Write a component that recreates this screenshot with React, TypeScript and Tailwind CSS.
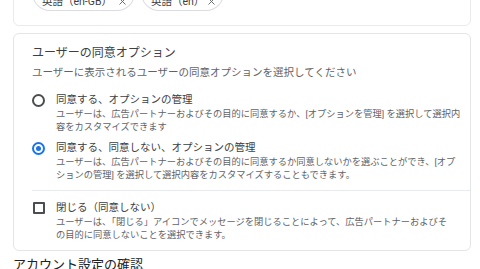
import { X } from "lucide-react";

const font = "font-['Roboto','Noto_Sans_CJK_JP',sans-serif]";

function Chip({ label, w }: { label: string; w: string }) {
  return (
    <span
      className={`flex h-[18px] ${w} items-center justify-between rounded-b-full border border-t-0 border-[#dadce0] pl-[9px] pr-[6px] text-[10.5px] text-[#3c4043]`}
    >
      <span>{label}</span>
      <X size={11} strokeWidth={2} className="text-[#5f6368]" />
    </span>
  );
}

function Radio({ checked }: { checked?: boolean }) {
  return (
    <span
      className={`mt-[0.5px] flex h-[13px] w-[13px] shrink-0 items-center justify-center rounded-full border-2 ${
        checked ? "border-[#1a73e8]" : "border-[#4a4e52]"
      }`}
    >
      {checked && <span className="h-[5px] w-[5px] rounded-full bg-[#1a73e8]" />}
    </span>
  );
}

function Option({
  control,
  title,
  lines,
}: {
  control: React.ReactNode;
  title: string;
  lines: string[];
}) {
  return (
    <div className="flex items-start gap-[11px] pr-[11px]">
      {control}
      <div className="min-w-0">
        <div className="text-[10.5px] leading-[14px] text-[#3c4043]">{title}</div>
        <div className="text-[9.25px] leading-[13px] text-[#5f6368]">
          {lines.map((l) => (
            <div key={l} className="whitespace-nowrap">
              {l}
            </div>
          ))}
        </div>
      </div>
    </div>
  );
}

export default function App() {
  return (
    <div className={`h-[269px] w-[480px] overflow-hidden bg-white ${font}`}>
      <div className="pl-[13px] pr-[9px]">
        <div className="-mt-[30px] flex h-[56px] items-end gap-[6px] rounded-[6px] border border-[#e8eaed] pb-[14px] pl-[18px]">
          <Chip label="英語（en-GB）" w="w-[103px]" />
          <Chip label="英語（en）" w="w-[83px]" />
        </div>

        <div className="mt-[7px] h-[218px] rounded-[6px] border border-[#e3e5e8] pl-[18px] pt-[11px]">
          <div className="text-[12px] leading-[16px] text-[#3c4043]">ユーザーの同意オプション</div>
          <div className="mt-[5px] text-[10.5px] leading-[14px] text-[#5f6368]">
            ユーザーに表示されるユーザーの同意オプションを選択してください
          </div>

          <div className="mt-[13px]">
            <Option
              control={<Radio />}
              title="同意する、オプションの管理"
              lines={[
                "ユーザーは、広告パートナーおよびその目的に同意するか、[オプションを管理] を選択して選択内",
                "容をカスタマイズできます",
              ]}
            />
          </div>
          <div className="mt-[8px]">
            <Option
              control={<Radio checked />}
              title="同意する、同意しない、オプションの管理"
              lines={[
                "ユーザーは、広告パートナーおよびその目的に同意するか同意しないかを選ぶことができ、[オプ",
                "ションの管理] を選択して選択内容をカスタマイズすることもできます。",
              ]}
            />
          </div>

          <div className="mt-[9px] h-px bg-[#e8eaed]" />

          <div className="mt-[10px]">
            <Option
              control={
                <span className="ml-[1px] mt-[1px] h-[12px] w-[12px] shrink-0 rounded-[1px] border-2 border-[#4a4e52]" />
              }
              title="閉じる（同意しない）"
              lines={[
                "ユーザーは、「閉じる」アイコンでメッセージを閉じることによって、広告パートナーおよびそ",
                "の目的に同意しないことを選択できます。",
              ]}
            />
          </div>
        </div>

        <div className="mt-[5px] text-[13px] leading-[18px] text-[#202124]">アカウント設定の確認</div>
      </div>
    </div>
  );
}
